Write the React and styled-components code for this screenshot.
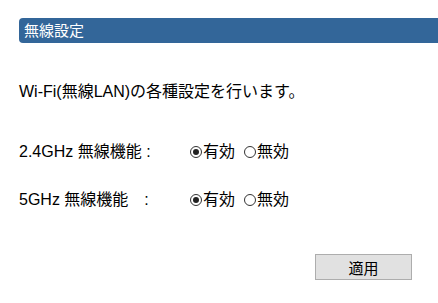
import React from 'react'
import styled, { createGlobalStyle } from 'styled-components'

const GlobalStyle = createGlobalStyle`
  html, body {
    margin: 0;
    padding: 0;
    background: #fff;
  }
  body {
    font-family: "Liberation Sans", Arial, "Noto Sans CJK JP", sans-serif;
    color: #000;
  }
`

const Page = styled.div`
  width: 438px;
  height: 303px;
  padding: 18px 0 0 19px;
  box-sizing: border-box;
  overflow: hidden;
`

const TitleBar = styled.div`
  height: 25px;
  background: #336699;
  border-radius: 4px 0 0 4px;
  color: #fff;
  font-size: 15px;
  line-height: 25px;
  padding-left: 5px;
`

const Description = styled.p`
  margin: 39px 0 0;
  font-size: 16px;
  line-height: 20px;
`

const SettingRow = styled.div`
  display: flex;
  align-items: center;
  margin-top: ${p => p.$gap}px;
  font-size: 16px;
  line-height: 20px;
`

const Label = styled.span`
  width: 171px;
  white-space: pre;
`

const Choice = styled.label`
  display: inline-flex;
  align-items: center;
  gap: 1px;
  margin-right: 9px;
`

const Radio = styled.span`
  width: 12px;
  height: 12px;
  box-sizing: border-box;
  border: 1px solid #333;
  border-radius: 50%;
  display: inline-flex;
  align-items: center;
  justify-content: center;
  &::after {
    content: '';
    width: 6px;
    height: 6px;
    border-radius: 50%;
    background: ${p => (p.$checked ? '#222' : 'transparent')};
  }
`

const Footer = styled.div`
  display: flex;
  justify-content: flex-end;
  margin-top: 44px;
  padding-right: 26px;
`

const Button = styled.button`
  width: 97px;
  height: 26px;
  background: #e1e1e1;
  border: 1px solid #adadad;
  font-family: inherit;
  font-size: 15px;
  color: #000;
  padding: 0;
`

const bands = [
  { label: '2.4GHz 無線機能 :', gap: 40 },
  { label: '5GHz 無線機能　:', gap: 28 },
]

export default function App() {
  return (
    <Page>
      <GlobalStyle />
      <TitleBar>無線設定</TitleBar>
      <Description>Wi-Fi(無線LAN)の各種設定を行います。</Description>
      {bands.map(b => (
        <SettingRow key={b.label} $gap={b.gap}>
          <Label>{b.label}</Label>
          <Choice><Radio $checked />有効</Choice>
          <Choice><Radio />無効</Choice>
        </SettingRow>
      ))}
      <Footer>
        <Button>適用</Button>
      </Footer>
    </Page>
  )
}
